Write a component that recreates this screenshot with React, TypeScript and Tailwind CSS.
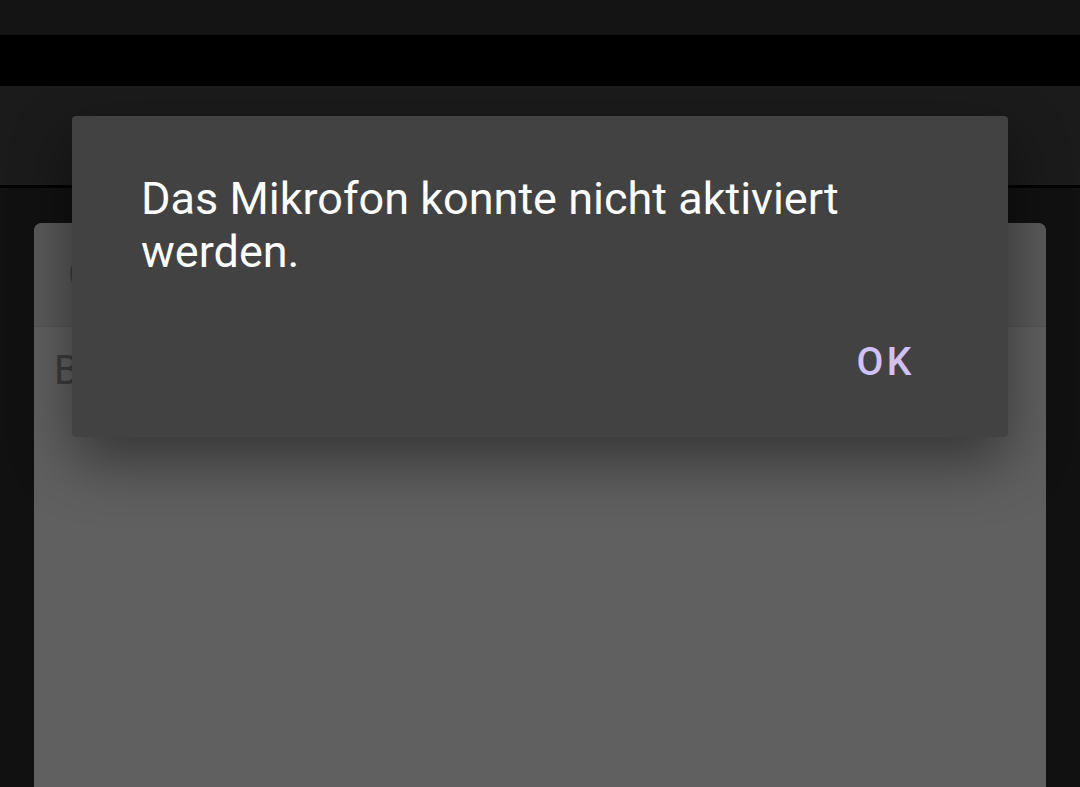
export default function App() {
  return (
    <div className="relative flex h-[787px] w-[1080px] flex-col overflow-hidden bg-[#111111] font-['Roboto',sans-serif]">
      <div className="h-[35px] shrink-0 bg-[#141414]" />
      <div className="h-[51px] shrink-0 bg-black" />
      <div className="h-[102px] shrink-0 border-b-[3px] border-black bg-[#1b1b1b]" />

      <div className="flex flex-1 flex-col px-[34px] pt-[35px]">
        <div className="flex flex-1 flex-col overflow-hidden rounded-t-[8px] bg-[#606060]">
          <div className="flex h-[104px] shrink-0 items-center border-b border-[#535353] bg-[#5a5a5a] px-[34px]">
            <span className="text-[40px] text-[#3c3c3c]">C</span>
          </div>
          <div className="flex-1 px-[20px] pt-[20px]">
            <span className="text-[40px] leading-[48px] text-[#3c3c3c]">B</span>
          </div>
        </div>
      </div>

      {/* alert dialog */}
      <div className="absolute left-[72px] top-[116px] flex h-[321px] w-[936px] flex-col rounded-[4px] bg-[#424242] shadow-[0_24px_60px_rgba(0,0,0,0.45)]">
        <p className="pl-[69px] pr-[60px] pt-[56px] text-[45px] leading-[53px] text-white">
          Das Mikrofon konnte nicht aktiviert werden.
        </p>
        <div className="mt-auto flex justify-end pb-[55px] pr-[93px]">
          <button className="text-[39px] font-medium leading-none tracking-[3.5px] text-[#d0c2f4]">OK</button>
        </div>
      </div>
    </div>
  )
}
